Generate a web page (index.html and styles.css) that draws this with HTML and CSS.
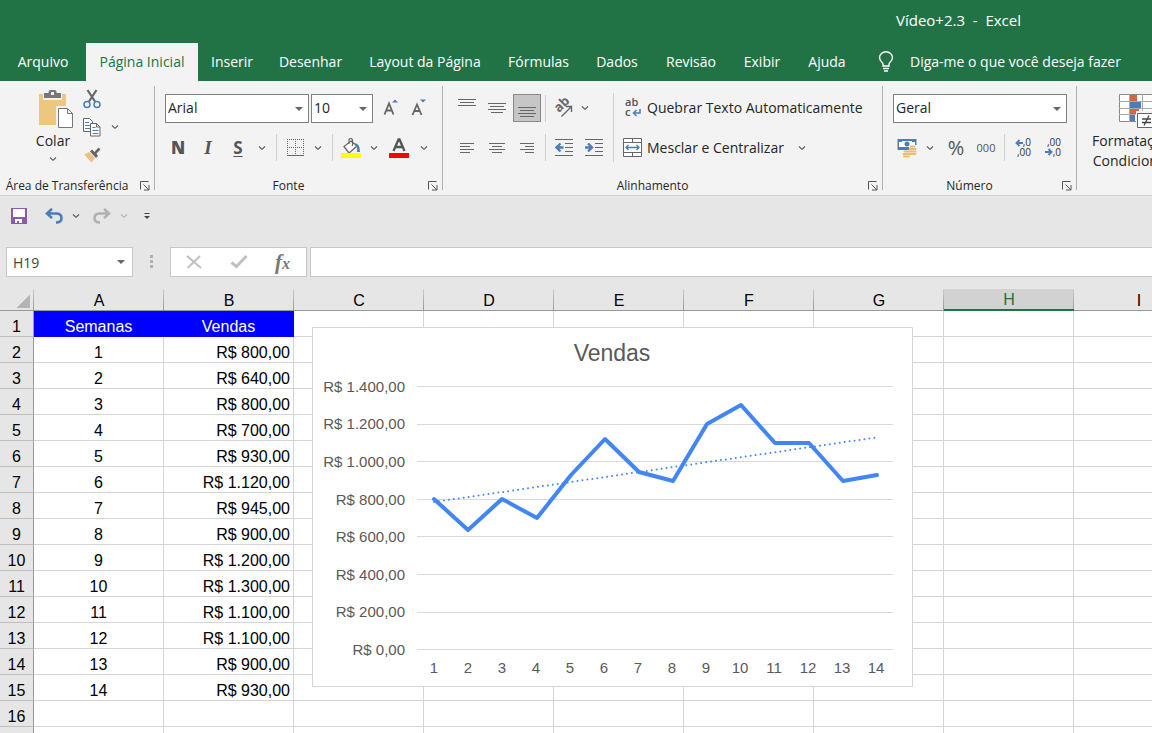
FILE: index.html
```html
<!DOCTYPE html>
<html lang="pt-BR">
<head>
<meta charset="utf-8">
<title>Vídeo+2.3 - Excel</title>
<link rel="stylesheet" href="styles.css">
</head>
<body>
<svg class="defs" aria-hidden="true">
  <symbol id="chev" viewBox="0 0 8 6"><path d="M1 1.500 4 4.300 7 1.500" fill="none" stroke="currentColor" stroke-width="1.100"/></symbol>
  <symbol id="launch" viewBox="0 0 10 10"><path d="M.5 8.500V.5H8.500M3.500 3.500 8.500 8.500M9 4v5H4" fill="none" stroke="#555"/></symbol>
</svg>
<header class="titlebar"><h1 class="title">Vídeo+2.3&nbsp; -&nbsp; Excel</h1></header>
<nav class="tabs">
  <button class="tab">Arquivo</button>
  <button class="tab tab-on">Página Inicial</button>
  <button class="tab">Inserir</button>
  <button class="tab">Desenhar</button>
  <button class="tab">Layout da Página</button>
  <button class="tab">Fórmulas</button>
  <button class="tab">Dados</button>
  <button class="tab">Revisão</button>
  <button class="tab">Exibir</button>
  <button class="tab">Ajuda</button>
  <button class="tab tell">
    <svg width="16" height="22" viewBox="0 0 16 22" fill="none" stroke="#fff" stroke-width="1.400"><path d="M5 15v-2C4.500 11 1.500 10 1.500 6.500a6.500 5.800 0 0 1 13 0C14.500 10 11.500 11 11 13v2ZM5 17.500h6M6 20h4"/></svg>
    Diga-me o que você deseja fazer
  </button>
</nav>

<section class="ribbon">
  <div class="group g-clip">
    <div class="body">
      <button class="big paste">
        <svg width="36" height="41" viewBox="0 0 36 41"><path d="M1 5h27v31H1z" fill="#eec77f"/><path d="M4 3h21v8H4z" fill="#f3f3f3"/><path d="M1 5h4v6h19V5h4v31H1z" fill="#eec77f"/><path d="M6 4h4.500V3q0-2 2-2h4q2 0 2 2v1H23v5H6z" fill="#777"/><path d="M13 3h3v3h-3z" fill="#f3f3f3"/><path d="M18 17h17v23H18z" fill="#f3f3f3"/><path d="M20.500 19.500h9l5 5v14h-14zM29.500 19.500v5h5" fill="#fff" stroke="#777"/></svg>
        <span>Colar</span>
        <svg class="chev" width="8" height="6"><use href="#chev"/></svg>
      </button>
      <div class="stack">
        <button class="ib" aria-label="Recortar"><svg width="18" height="20" viewBox="0 0 18 20" fill="none"><path d="M4.500 1 12 12.500M13.500 1 6 12.500" stroke="#666" stroke-width="2.200"/><circle cx="4" cy="15.500" r="3" stroke="#4a7ebb" stroke-width="1.500"/><circle cx="14" cy="15.500" r="3" stroke="#4a7ebb" stroke-width="1.500"/></svg></button>
        <div class="pair">
          <button class="ib" aria-label="Copiar"><svg width="18" height="19" viewBox="0 0 18 19" fill="#fff" stroke="#666"><path d="M.5.5h6l3 3v10h-9z"/><path d="M2 4.500h4M2 7.500h5M2 10.500h5" stroke="#4a7ebb"/><path d="M7.500 5.500h6l3.500 3.500v9H7.500zM13.500 5.500V9H17"/><path d="M9.500 9.500h3M9.500 12.500h6M9.500 15.500h6" stroke="#4a7ebb"/></svg></button>
          <button class="ib drop" aria-label="Opções de copiar"><svg width="8" height="6"><use href="#chev"/></svg></button>
        </div>
        <button class="ib" aria-label="Pincel de formatação"><svg width="18" height="16" viewBox="0 0 18 16"><path d="M1 7.500 6 5l6 6-3.500 4.500Z" fill="#eec284"/><path d="m7 4.500 2-2L11.500 5 15.500.5l2 2-4 4L15 9l-2 2Z" fill="#666"/></svg></button>
      </div>
    </div>
    <div class="label"><span>Área de Transferência</span><button class="launch" aria-label="Mais opções"><svg width="10" height="10"><use href="#launch"/></svg></button></div>
  </div>

  <div class="group g-font">
    <div class="body"><div class="lines">
      <div class="line">
        <div class="combo c-name"><select aria-label="Fonte"><option>Arial</option></select></div>
        <div class="combo c-size"><select aria-label="Tamanho"><option>10</option></select></div>
        <button class="ib" aria-label="Aumentar fonte"><svg width="16" height="18" viewBox="0 0 16 18"><path d="M1.500 15.500 6 4.500l4.500 11M3.200 11.500h5.600" fill="none" stroke="#666" stroke-width="1.800"/><path d="m9 3.500 3-3 3 3z" fill="#4a7ebb"/></svg></button>
        <button class="ib" aria-label="Diminuir fonte"><svg width="16" height="18" viewBox="0 0 16 18"><path d="M1.500 16 6 5.500 10.500 16M3.200 12h5.600" fill="none" stroke="#666" stroke-width="1.800"/><path d="m9 .5 3 3 3-3z" fill="#4a7ebb"/></svg></button>
      </div>
      <div class="line tools">
        <button class="ib ch"><b>N</b></button>
        <button class="ib ch it">I</button>
        <button class="ib ch un">S</button>
        <button class="ib drop" aria-label="Sublinhado"><svg width="8" height="6"><use href="#chev"/></svg></button>
        <i class="sep"></i>
        <button class="ib" aria-label="Bordas"><svg width="17" height="18" viewBox="0 0 17 18" fill="none" stroke="#666"><path d="M.5 0v16M8.500 0v16M16.500 0v16M0 .5h17M0 8.500h17" stroke-dasharray="1 1"/><path d="M0 16.500h17"/></svg></button>
        <button class="ib drop" aria-label="Opções de bordas"><svg width="8" height="6"><use href="#chev"/></svg></button>
        <i class="sep"></i>
        <button class="ib" aria-label="Cor de preenchimento"><svg width="20" height="20" viewBox="0 0 20 20"><path d="m10 3 6 5-8 7-5-6.500Z" fill="#fff" stroke="#666" stroke-width="1.300"/><path d="M8 6V2q0-1.500 1.500-1.500T11.500 2v6" fill="none" stroke="#666" stroke-width="1.200"/><path d="M14 5q5 1 5 9h-3q1-3-1-6z" fill="#4a7ebb"/><path d="M0 15h20v5H0z" fill="#ff0"/></svg></button>
        <button class="ib drop" aria-label="Opções de preenchimento"><svg width="8" height="6"><use href="#chev"/></svg></button>
        <button class="ib wide" aria-label="Cor da fonte"><svg width="20" height="20" viewBox="0 0 20 20"><path d="M4.500 13 9.500 1.500h1L15.500 13M6.500 9h7" fill="none" stroke="#555" stroke-width="2.300"/><path d="M0 15h20v5H0z" fill="red"/></svg></button>
        <button class="ib drop" aria-label="Opções de cor"><svg width="8" height="6"><use href="#chev"/></svg></button>
      </div>
    </div></div>
    <div class="label"><span>Fonte</span><button class="launch" aria-label="Mais opções"><svg width="10" height="10"><use href="#launch"/></svg></button></div>
  </div>

  <div class="group g-align">
    <div class="body">
      <div class="lines">
        <div class="line">
          <button class="ib w30" aria-label="Alinhar em cima"><svg width="18" height="18" viewBox="0 0 18 18" stroke="#666"><path d="M0 .5h18M2 3.500h14M0 6.500h18"/></svg></button>
          <button class="ib w30" aria-label="Alinhar no meio"><svg width="18" height="18" viewBox="0 0 18 18" stroke="#666"><path d="M0 4.500h18M2 7.500h14M0 10.500h18M3 13.500h12"/></svg></button>
          <button class="ib w30 on" aria-label="Alinhar embaixo"><svg width="18" height="18" viewBox="0 0 18 18" stroke="#666"><path d="M0 8.500h18M2 11.500h14M0 14.500h18M2 17.500h14"/></svg></button>
          <i class="sep s3"></i>
          <button class="ib" aria-label="Orientação"><svg class="spill" width="20" height="20" viewBox="0 0 20 20"><text class="ab" x="0" y="0" transform="translate(6 15) rotate(-45)">ab</text><path d="M8.500 18.500 18 9M13 8.500h5.500V14" fill="none" stroke="#666" stroke-width="1.400"/></svg></button>
          <button class="ib d14" aria-label="Opções de orientação"><svg width="8" height="6"><use href="#chev"/></svg></button>
        </div>
        <div class="line">
          <button class="ib w30" aria-label="Alinhar à esquerda"><svg width="16" height="12" viewBox="0 0 16 12" stroke="#666"><path d="M1 1.500h14M1 4.500h10M1 7.500h14M1 10.500h10"/></svg></button>
          <button class="ib w30" aria-label="Centralizar"><svg width="16" height="12" viewBox="0 0 16 12" stroke="#666"><path d="M0 1.500h16M3 4.500h10M0 7.500h16M3 10.500h10"/></svg></button>
          <button class="ib w30" aria-label="Alinhar à direita"><svg width="16" height="12" viewBox="0 0 16 12" stroke="#666"><path d="M1 1.500h14M6 4.500h9M1 7.500h14M6 10.500h9"/></svg></button>
          <i class="sep s3"></i>
          <button class="ib w30" aria-label="Diminuir recuo"><svg width="18" height="17" viewBox="0 0 18 17"><path d="M0 .5h18M10 4.500h8M10 8.500h8M10 12.500h8M0 16.500h18" stroke="#666"/><path d="M8.500 8.500H2M5.500 4.500l-4 4 4 4" fill="none" stroke="#4a7ebb" stroke-width="2.400"/></svg></button>
          <button class="ib w30" aria-label="Aumentar recuo"><svg width="18" height="17" viewBox="0 0 18 17"><path d="M0 .5h18M10 4.500h8M10 8.500h8M10 12.500h8M0 16.500h18" stroke="#666"/><path d="M0 8.500h6M3 4.500l4 4-4 4" fill="none" stroke="#4a7ebb" stroke-width="2.400"/></svg></button>
        </div>
      </div>
      <i class="sep tall"></i>
      <div class="lines">
        <div class="line"><button class="tb"><svg class="spill" width="20" height="20" viewBox="0 0 20 20"><text class="wr" x="2" y="8">ab</text><text class="wr" x="2" y="18">c</text><path d="M17 11v4h-6M13.500 12 10.500 15l3 3" fill="none" stroke="#4a7ebb" stroke-width="1.500"/></svg>Quebrar Texto Automaticamente</button></div>
        <div class="line"><button class="tb"><svg width="20" height="20" viewBox="0 0 20 20" fill="#fff" stroke="#666"><path d="M.5.5h18v18H.5zM.5 4.500h18M.5 14.500h18M9.500.5v4M9.500 14.500v4"/><path d="M3 9.500h13M5.500 7 3 9.500 5.500 12M13.500 7 16 9.500 13.500 12" fill="none" stroke="#4a7ebb" stroke-width="1.400"/></svg>Mesclar e Centralizar</button><button class="ib drop" aria-label="Opções de mesclar"><svg width="8" height="6"><use href="#chev"/></svg></button></div>
      </div>
    </div>
    <div class="label"><span>Alinhamento</span><button class="launch" aria-label="Mais opções"><svg width="10" height="10"><use href="#launch"/></svg></button></div>
  </div>

  <div class="group g-num">
    <div class="body"><div class="lines">
      <div class="line"><div class="combo c-num"><select aria-label="Formato de número"><option>Geral</option></select></div></div>
      <div class="line">
        <button class="ib" aria-label="Formato de contabilização"><svg width="20" height="20" viewBox="0 0 20 20"><path d="M.5 1h19v11H.5z" fill="#4a7ebb"/><path d="M2 4h3V3h10v1h3v5H2z" fill="#fff"/><circle cx="10" cy="6" r="2.500" fill="#4a7ebb"/><path d="M12 7h8v12H12zM6 12h7v8H6z" fill="#f3f3f3"/><path d="M13.500 8.500h4M12.500 11h6M12.500 13.500h6M12.500 16h6M7.500 13.500h4M6.500 16h6M7 18.500h5" stroke="#e9bd78" stroke-width="1.800" stroke-linecap="round"/></svg></button>
        <button class="ib drop" aria-label="Opções de moeda"><svg width="8" height="6"><use href="#chev"/></svg></button>
        <button class="ib pct">%</button>
        <button class="ib zeros">000</button>
        <i class="sep"></i>
        <button class="ib w30" aria-label="Aumentar casas decimais"><svg class="spill" width="18" height="20" viewBox="0 0 18 20"><text class="dec" x="16" y="8">,0</text><text class="dec" x="16" y="18">,00</text><path d="M8 5H2M4.500 2l-3 3 3 3" fill="none" stroke="#4a7ebb" stroke-width="1.900"/></svg></button>
        <button class="ib w30" aria-label="Diminuir casas decimais"><svg class="spill" width="18" height="20" viewBox="0 0 18 20"><text class="dec" x="16" y="8">,00</text><text class="dec" x="16" y="18">,0</text><path d="M0 14h6M3.500 11l3 3-3 3" fill="none" stroke="#4a7ebb" stroke-width="1.900"/></svg></button>
      </div>
    </div></div>
    <div class="label"><span>Número</span><button class="launch" aria-label="Mais opções"><svg width="10" height="10"><use href="#launch"/></svg></button></div>
  </div>

  <div class="group g-style">
    <div class="body">
      <button class="big fmt">
        <svg width="40" height="36" viewBox="0 0 40 36"><path d="M6.500.5h33v27h-33z" fill="#fff" stroke="#888"/><path d="M6 7.500h34M6 14.500h34M6 20.500h34M16.500 0v28M29.500 0v28" stroke="#aaa"/><path d="M17 1h7v6h-7zM17 15h9v5h-9z" fill="#d9623f"/><path d="M17 8h11v6H17zM17 21h5v6h-5z" fill="#4a7ebb"/><path d="M23 17h17v18H23z" fill="#f3f3f3"/><path d="M24.500 19.500h16v14h-16z" fill="#fff" stroke="#666"/><path d="M29 25h9M29 28.500h9M36 21.500l-5 10" stroke="#444" stroke-width="1.300"/></svg>
        <span>Formatação<br>Condicional</span>
      </button>
    </div>
  </div>
</section>

<div class="qat">
  <button class="ib" aria-label="Salvar"><svg width="16" height="16" viewBox="0 0 16 16"><path d="M0 0h16v16H0z" fill="#8a5aad"/><path d="M2 1h12v8H2zM4 11h7v4H4z" fill="#fff"/><path d="M6 13h2v2H6z" fill="#8a5aad"/></svg></button>
  <button class="ib undo" aria-label="Desfazer"><svg width="18" height="16" viewBox="0 0 18 16" fill="none" stroke="#4a7ebb" stroke-width="2.600"><path d="M2 5.500h9q5.500 0 5.500 4.500t-5.500 4.500M7 .9 2 5.500l5 4.600"/></svg></button>
  <button class="ib d14" aria-label="Histórico"><svg width="8" height="6"><use href="#chev"/></svg></button>
  <button class="ib redo off" aria-label="Refazer"><svg width="18" height="16" viewBox="0 0 18 16" fill="none" stroke="#b1b1b1" stroke-width="2.600"><path d="M16 5.500H7Q1.500 5.500 1.500 10T7 14.500M11 .9l5 4.600-5 4.600"/></svg></button>
  <button class="ib d14 off" aria-label="Repetições"><svg width="8" height="6"><use href="#chev"/></svg></button>
  <button class="ib w30" aria-label="Personalizar"><svg width="6" height="8" viewBox="0 0 6 8"><path d="M.5 1.500h5" stroke="#444"/><path d="M0 4h6L3 7z" fill="#444"/></svg></button>
</div>

<div class="fbar">
  <div class="combo namebox"><input aria-label="Caixa de nome" value="H19"></div>
  <svg class="dots" width="4" height="14" viewBox="0 0 4 14"><path d="M0 0h3v3H0zM0 5h3v3H0zM0 10h3v3H0z" fill="#b0b0b0"/></svg>
  <div class="fbtns">
    <button aria-label="Cancelar"><svg width="16" height="14" viewBox="0 0 16 14" fill="none" stroke="#c0c0c0" stroke-width="2"><path d="m1 1 14 12M14 1 1.500 13"/></svg></button>
    <button aria-label="Inserir"><svg width="18" height="14" viewBox="0 0 18 14" fill="none" stroke="#c0c0c0" stroke-width="3"><path d="m1.500 7.500 5 4L16.500 1"/></svg></button>
    <button class="fx" aria-label="Inserir função">f<small>x</small></button>
  </div>
  <input class="formula" aria-label="Barra de fórmulas">
</div>

<main class="sheet">
  <table class="grid">
    <colgroup><col class="c0"><col><col><col><col><col><col><col><col><col></colgroup>
    <thead><tr><th class="corner"></th><th>A</th><th>B</th><th>C</th><th>D</th><th>E</th><th>F</th><th>G</th><th class="sel">H</th><th>I</th></tr></thead>
    <tbody>
      <tr class="head"><th>1</th><td>Semanas</td><td>Vendas</td><td></td><td></td><td></td><td></td><td></td><td></td><td></td></tr>
      <tr><th>2</th><td>1</td><td>R$ 800,00</td><td></td><td></td><td></td><td></td><td></td><td></td><td></td></tr>
      <tr><th>3</th><td>2</td><td>R$ 640,00</td><td></td><td></td><td></td><td></td><td></td><td></td><td></td></tr>
      <tr><th>4</th><td>3</td><td>R$ 800,00</td><td></td><td></td><td></td><td></td><td></td><td></td><td></td></tr>
      <tr><th>5</th><td>4</td><td>R$ 700,00</td><td></td><td></td><td></td><td></td><td></td><td></td><td></td></tr>
      <tr><th>6</th><td>5</td><td>R$ 930,00</td><td></td><td></td><td></td><td></td><td></td><td></td><td></td></tr>
      <tr><th>7</th><td>6</td><td>R$ 1.120,00</td><td></td><td></td><td></td><td></td><td></td><td></td><td></td></tr>
      <tr><th>8</th><td>7</td><td>R$ 945,00</td><td></td><td></td><td></td><td></td><td></td><td></td><td></td></tr>
      <tr><th>9</th><td>8</td><td>R$ 900,00</td><td></td><td></td><td></td><td></td><td></td><td></td><td></td></tr>
      <tr><th>10</th><td>9</td><td>R$ 1.200,00</td><td></td><td></td><td></td><td></td><td></td><td></td><td></td></tr>
      <tr><th>11</th><td>10</td><td>R$ 1.300,00</td><td></td><td></td><td></td><td></td><td></td><td></td><td></td></tr>
      <tr><th>12</th><td>11</td><td>R$ 1.100,00</td><td></td><td></td><td></td><td></td><td></td><td></td><td></td></tr>
      <tr><th>13</th><td>12</td><td>R$ 1.100,00</td><td></td><td></td><td></td><td></td><td></td><td></td><td></td></tr>
      <tr><th>14</th><td>13</td><td>R$ 900,00</td><td></td><td></td><td></td><td></td><td></td><td></td><td></td></tr>
      <tr><th>15</th><td>14</td><td>R$ 930,00</td><td></td><td></td><td></td><td></td><td></td><td></td><td></td></tr>
      <tr><th>16</th><td></td><td></td><td></td><td></td><td></td><td></td><td></td><td></td><td></td></tr>
      <tr><th></th><td></td><td></td><td></td><td></td><td></td><td></td><td></td><td></td><td></td></tr>
    </tbody>
  </table>
  <svg class="chart" viewBox="312 327 601 360" role="img" aria-label="Vendas">
    <path d="M312.500 327.500h600v359h-600z" fill="#fff" stroke="#d4d4d4"/>
    <text class="ct" x="612" y="361">Vendas</text>
    <path d="M417 386.500h476M417 424.500h476M417 461.500h476M417 499.500h476M417 536.500h476M417 574.500h476M417 612.500h476M417 649.500h476" stroke="#d9d9d9"/>
    <g class="yl"><text x="405" y="392">R$ 1.400,00</text><text x="405" y="429">R$ 1.200,00</text><text x="405" y="467">R$ 1.000,00</text><text x="405" y="505">R$ 800,00</text><text x="405" y="542">R$ 600,00</text><text x="405" y="580">R$ 400,00</text><text x="405" y="617">R$ 200,00</text><text x="405" y="655">R$ 0,00</text></g>
    <g class="xl"><text x="434" y="673">1</text><text x="468" y="673">2</text><text x="502" y="673">3</text><text x="536" y="673">4</text><text x="570" y="673">5</text><text x="604" y="673">6</text><text x="638" y="673">7</text><text x="672" y="673">8</text><text x="706" y="673">9</text><text x="740" y="673">10</text><text x="774" y="673">11</text><text x="808" y="673">12</text><text x="842" y="673">13</text><text x="876" y="673">14</text></g>
    <path d="M434 502 876 437.500" stroke="#4285f4" stroke-width="2" stroke-dasharray="0 5" stroke-linecap="round"/>
    <path d="M434 499 468 530 502 499 537 518 571 475 605 439 639 472 673 481 707 424 741 405 775 443H809L843 481 877 475" fill="none" stroke="#4285f4" stroke-width="4" stroke-linecap="round" stroke-linejoin="round"/>
  </svg>
</main>
</body>
</html>
```
FILE: styles.css
```css
* { box-sizing: border-box; }
body {
  margin: 0;
  height: 100vh;
  display: flex;
  flex-direction: column;
  overflow: hidden;
  background: #e6e6e6;
  color: #262626;
  font: 14px/20px "Open Sans", "Noto Sans", sans-serif;
}
button, input, select { font: inherit; color: inherit; margin: 0; padding: 0; border: 0; background: none; border-radius: 0; }
svg { display: block; flex: none; }
.spill { overflow: visible; }
.defs { width: 0; height: 0; position: absolute; }

.titlebar { background: #217346; color: #fff; height: 43px; padding: 10px 131px 0 0; text-align: right; }
.title { margin: 0; font: inherit; font-size: 15px; }
.tabs {
  display: grid;
  grid-template-columns: 84px 112px 70px 89px 138px 88px 70px 78px 64px 66px 1fr;
  height: 38px;
  background: #217346;
  color: #fff;
}
.tabs { grid-template-columns: 86px 112px 68px 89px 140px 87px 70px 78px 64px 66px 1fr; }
.tab { white-space: nowrap; }
.tab-on { background: #f3f3f3; color: #217346; }
.tell { display: flex; align-items: center; gap: 16px; padding-left: 18px; }

.ribbon { display: flex; background: #f3f3f3; border-bottom: 1px solid #d2d2d2; overflow: hidden; }
.group {
  flex: none;
  display: flex;
  flex-direction: column;
  height: 114px;
  background: linear-gradient(#b0b0b0, #b0b0b0) right center / 1px 104px no-repeat;
}
.g-clip { width: 155px; }
.g-font { width: 288px; }
.g-align { width: 440px; }
.g-num { width: 194px; }
.g-style { background: none; }
.body { display: flex; height: 94px; }
.label { display: flex; align-items: center; gap: 6px; height: 20px; padding: 1px 5px 0 0; font-size: 12px; }
.label span { flex: 1; text-align: center; white-space: nowrap; }
.lines { display: grid; grid-template-rows: 47px 39px; }
.line { display: flex; align-items: center; }
.line:first-child { padding-top: 7px; }
.g-font .lines, .g-num .lines { padding-left: 10px; }
.tools { margin-left: -2px; }
.g-align .lines:first-child { padding-left: 9px; }

.ib { display: flex; align-items: center; justify-content: center; width: 28px; height: 28px; color: #555; flex: none; }
.drop { width: 18px; }
.d14 { width: 16px; }
.w30 { width: 30px; }
.wide { width: 32px; }
.off { color: #b1b1b1; }
.on { width: 28px; margin: 0 1px; background: #c6c6c6; border: 1px solid #888; }
.ch { width: 30px; font-size: 17px; font-weight: 700; }
.it { font-family: "Liberation Serif", serif; font-style: italic; font-size: 19px; }
.un { text-decoration: underline; text-decoration-thickness: 1px; text-underline-offset: 2px; }
.pct { width: 34px; font-size: 20px; }
.zeros { width: 26px; font-size: 11px; }
.sep { width: 1px; height: 27px; background: #d0d0d0; margin: 0 4px 0 5px; flex: none; }
.s3 { margin: 0 3px; }
.tall { height: 69px; margin: 12px 9px 0 4px; }
.tb { display: flex; align-items: center; gap: 4px; white-space: nowrap; }
.tb + .drop { margin-left: 9px; }
.ab { font: 700 13px "Open Sans", sans-serif; fill: #666; }
.wr { font: 600 11px "Open Sans", sans-serif; fill: #555; stroke: none; }
.dec { font: 10px "Open Sans", sans-serif; fill: #333; text-anchor: end; }

.big { display: flex; flex-direction: column; align-items: center; }
.paste { padding: 8px 0 0; width: 76px; margin-left: 15px; }
.paste svg:first-child { margin-left: 5px; }
.paste span { line-height: 22px; }
.paste .chev { margin-top: 4px; color: #555; }
.stack { display: grid; grid-template-rows: repeat(3, 28px); padding-top: 4px; margin-left: -13px; }
.pair { display: flex; }
.fmt { width: 108px; padding-top: 13px; }
.fmt svg { margin-left: 4px; }
.fmt span { margin-top: 1px; }

.combo { position: relative; height: 29px; background: #fff; border: 1px solid #7f7f7f; flex: none; }
.combo select, .combo input { width: 100%; height: 100%; padding-left: 2px; appearance: none; outline: 0; }
.combo::after {
  content: "";
  position: absolute;
  right: 5px;
  top: 12px;
  border: 4px solid transparent;
  border-top-color: #666;
  border-bottom: 0;
  pointer-events: none;
}
.c-name { width: 144px; }
.c-size { width: 62px; margin: 0 4px 0 2px; }
.c-num { width: 174px; }

.qat { display: flex; align-items: center; height: 40px; padding-left: 5px; margin-bottom: 11px; }
.undo { margin-left: 7px; }
.redo { margin-left: 4px; }

.fbar { display: flex; align-items: center; height: 30px; padding-left: 6px; margin-bottom: 12px; }
.namebox { width: 127px; height: 30px; border-color: #c6c6c6; }
.namebox input { padding-left: 6px; color: #444; }
.namebox::after { right: 7px; }
.dots { margin: 0 16px 0 17px; }
.fbtns { display: grid; grid-template-columns: repeat(3, 1fr); width: 137px; height: 30px; background: #fff; border: 1px solid #c6c6c6; margin-right: 3px; flex: none; }
.fbtns button { display: flex; align-items: center; justify-content: center; }
.fbtns .fx { font: italic 700 21px/24px "Liberation Serif", serif; color: #777; padding-right: 2px; }
.fx small { font-size: 16px; padding-top: 4px; }
.formula { flex: 1; min-width: 0; height: 30px; background: #fff; border: 1px solid #c6c6c6; border-right: 0; }

.sheet { position: relative; flex: 1; overflow: hidden; font: 16px/22px "Liberation Sans", Arial, sans-serif; color: #000; }
.grid { table-layout: fixed; width: 1204px; border-collapse: separate; border-spacing: 0; background: #fff; }
.grid col { width: 130px; }
.grid .c0 { width: 34px; }
.grid th { font-weight: 400; background: #e6e6e6; padding: 0; }
.grid thead th {
  height: 22px;
  padding-top: 2px;
  line-height: 19px;
  border-bottom: 1px solid #999;
  background: linear-gradient(#ccc, #999) right / 1px 100% no-repeat #e6e6e6;
}
.grid thead .sel { background-color: #d2d2d2; color: #217346; border-bottom: 2px solid #217346; line-height: 18px; }
.grid thead .corner {
  background:
    linear-gradient(135deg, transparent 50%, #b4b4b4 50%) 16px 5px / 14px 14px no-repeat,
    linear-gradient(#ccc, #999) right / 1px 100% no-repeat #e6e6e6;
}
.grid td, .grid tbody th { height: 26px; padding: 6px 3px 0; line-height: 19px; border-right: 1px solid #d4d4d4; border-bottom: 1px solid #d4d4d4; }
.grid tbody th { padding: 6px 0 0; border-right-color: #999; border-bottom-color: #bdbdbd; }
.grid td:nth-child(2) { text-align: center; }
.grid td:nth-child(3) { text-align: right; }
.grid .head td:nth-child(-n+3) { background: #00f; color: #fff; border-color: #00f; text-align: center; }
.chart { position: absolute; left: 312px; top: 38px; width: 601px; height: 360px; font: 15px "Liberation Sans", Arial, sans-serif; }
.chart text { fill: #595959; }
.chart .ct { font-size: 23px; text-anchor: middle; }
.yl { text-anchor: end; }
.xl { text-anchor: middle; }
```
